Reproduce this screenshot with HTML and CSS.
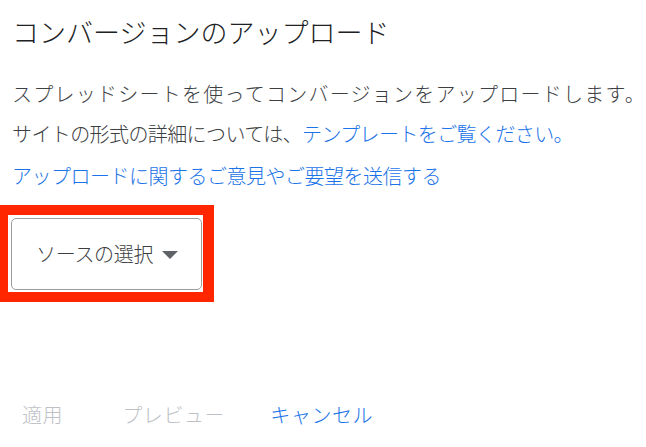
FILE: index.html
```html
<!DOCTYPE html>
<html lang="ja">
<head>
<meta charset="utf-8">
<title>コンバージョンのアップロード</title>
<link rel="stylesheet" href="styles.css">
</head>
<body>
<div class="panel">
  <h1 class="title">コンバージョンのアップロード</h1>
  <div class="desc">
    <p class="line line-1">スプレッドシートを使ってコンバージョンをアップロードします。</p>
    <p class="line line-2">サイトの形式の詳細については、<a class="link" href="#">テンプレートをご覧ください。</a></p>
  </div>
  <p class="line line-3"><a class="link" href="#">アップロードに関するご意見やご要望を送信する</a></p>
  <div class="highlight">
    <button class="source-btn" type="button">
      <span class="source-label">ソースの選択</span>
      <svg class="caret" width="16" height="8" viewBox="0 0 16 8" aria-hidden="true"><path d="M0 0 L16 0 L8 8 Z" fill="#5f6368"/></svg>
    </button>
  </div>
  <div class="actions">
    <button class="action disabled" type="button">適用</button>
    <button class="action disabled" type="button">プレビュー</button>
    <button class="action primary" type="button">キャンセル</button>
  </div>
</div>
</body>
</html>
```

FILE: styles.css
```css
html, body {
  margin: 0;
  padding: 0;
  background: #ffffff;
}

body {
  font-family: "Noto Sans CJK JP", "Noto Sans", sans-serif;
  font-weight: 300;
  color: #3c4043;
}

.panel {
  width: 646px;
  height: 447px;
  padding-top: 14px;
  box-sizing: border-box;
}

.title {
  margin: 0 0 0 12px;
  font-size: 27px;
  line-height: 36px;
  font-weight: 300;
  color: #202124;
}

.desc {
  margin-top: 24px;
  padding-left: 12px;
}

.line {
  margin: 0;
  font-size: 20px;
  line-height: 40px;
  white-space: nowrap;
}

.line-1 {
  letter-spacing: 1.25px;
}

.line-2 {
  letter-spacing: -0.6px;
}

.line-3 {
  margin-top: 2px;
  padding-left: 12px;
  letter-spacing: -0.5px;
}

.link {
  color: #1a73e8;
  text-decoration: none;
}

.highlight {
  display: inline-flex;
  margin-top: 9px;
  border-style: solid;
  border-color: #ff2600;
  border-width: 10px 11px 10px 8px;
  padding: 3px 1px 2px 3px;
  background: #ffffff;
}

.source-btn {
  display: flex;
  align-items: center;
  gap: 9px;
  width: 191px;
  height: 72px;
  box-sizing: border-box;
  padding: 0 0 0 24px;
  border: 1px solid #9e9e9e;
  border-radius: 5px;
  background: #ffffff;
  font-family: inherit;
  font-weight: 300;
  font-size: 20px;
  color: #3c4043;
  cursor: pointer;
}

.source-label {
  line-height: 28px;
  letter-spacing: -0.3px;
}

.caret {
  display: block;
  margin-top: 2px;
}

.actions {
  display: flex;
  margin-top: 93px;
  padding-left: 22px;
}

.action {
  margin: 0;
  padding: 0;
  border: 0;
  background: none;
  font-family: inherit;
  font-weight: 300;
  font-size: 20px;
  line-height: 40px;
  letter-spacing: 0.6px;
  cursor: pointer;
}

.action + .action {
  margin-left: 59px;
}

.action + .action + .action {
  margin-left: 45px;
}

.disabled {
  color: #bdc1c6;
}

.primary {
  color: #1a73e8;
}
```
